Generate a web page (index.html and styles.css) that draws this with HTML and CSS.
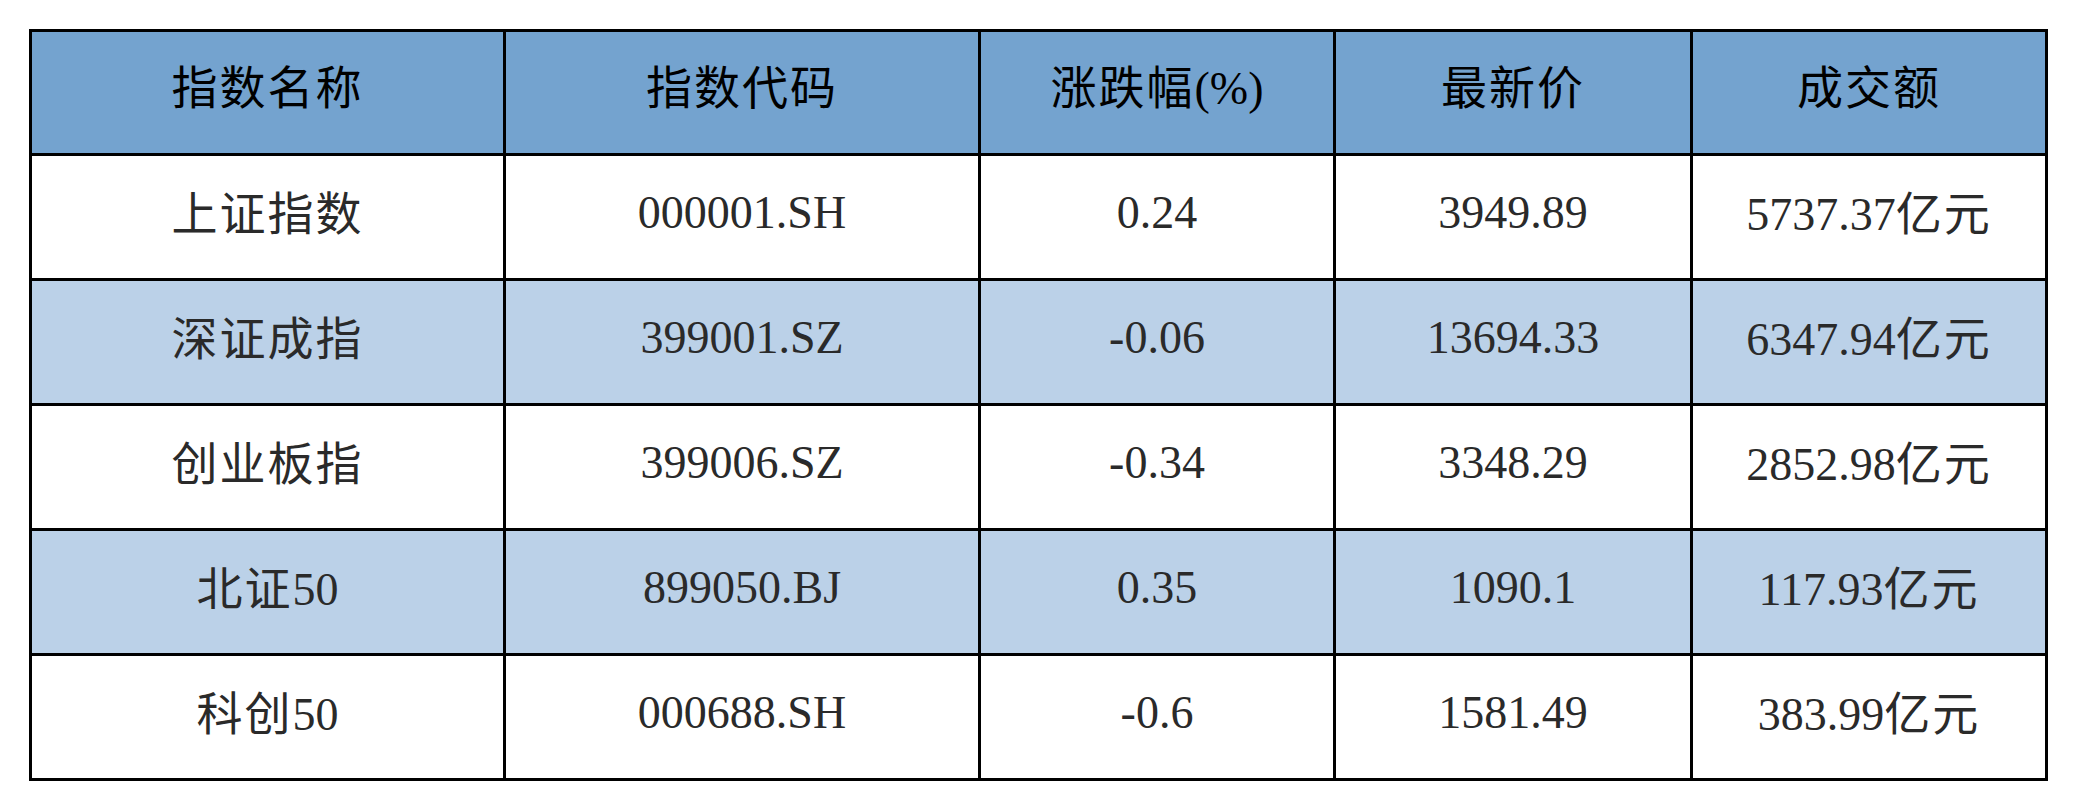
FILE: index.html
```html
<!DOCTYPE html>
<html lang="zh-CN">
<head>
<meta charset="utf-8">
<title>指数行情</title>
<link rel="stylesheet" href="styles.css">
</head>
<body>
<div class="page">
  <table class="quote-table">
    <colgroup>
      <col class="c-name">
      <col class="c-code">
      <col class="c-chg">
      <col class="c-price">
      <col class="c-amt">
    </colgroup>
    <thead>
      <tr>
        <th><span class="cj">指数名称</span></th>
        <th><span class="cj">指数代码</span></th>
        <th><span class="cj">涨跌幅</span>(%)</th>
        <th><span class="cj">最新价</span></th>
        <th><span class="cj">成交额</span></th>
      </tr>
    </thead>
    <tbody>
      <tr>
        <td><span class="cj">上证指数</span></td>
        <td>000001.SH</td>
        <td>0.24</td>
        <td>3949.89</td>
        <td>5737.37<span class="cj">亿元</span></td>
      </tr>
      <tr class="alt">
        <td><span class="cj">深证成指</span></td>
        <td>399001.SZ</td>
        <td>-0.06</td>
        <td>13694.33</td>
        <td>6347.94<span class="cj">亿元</span></td>
      </tr>
      <tr>
        <td><span class="cj">创业板指</span></td>
        <td>399006.SZ</td>
        <td>-0.34</td>
        <td>3348.29</td>
        <td>2852.98<span class="cj">亿元</span></td>
      </tr>
      <tr class="alt">
        <td><span class="cj">北证</span>50</td>
        <td>899050.BJ</td>
        <td>0.35</td>
        <td>1090.1</td>
        <td>117.93<span class="cj">亿元</span></td>
      </tr>
      <tr>
        <td><span class="cj">科创</span>50</td>
        <td>000688.SH</td>
        <td>-0.6</td>
        <td>1581.49</td>
        <td>383.99<span class="cj">亿元</span></td>
      </tr>
    </tbody>
  </table>
</div>
</body>
</html>
```
FILE: styles.css
```css
html, body {
  margin: 0;
  padding: 0;
  background: #ffffff;
}

.page {
  padding: 29px 0 0 29px;
}

.quote-table {
  border-collapse: collapse;
  width: 2019px;
  table-layout: fixed;
  font-family: "Liberation Serif", "Noto Sans CJK SC", serif;
  font-size: 46px;
  color: #2a2a2a;
}

.c-name { width: 474px; }
.c-code { width: 475px; }
.c-chg { width: 355px; }
.c-price { width: 357px; }
.c-amt { width: 355px; }

.quote-table th,
.quote-table td {
  border: 3px solid #000000;
  text-align: center;
  vertical-align: middle;
  padding: 0;
  font-weight: 400;
  line-height: 1.15;
}

.quote-table th {
  background: #74a3cf;
  color: #000000;
  padding-bottom: 12px;
  height: 109px;
}

.quote-table td {
  background: #ffffff;
  padding-bottom: 8px;
  height: 114px;
}

.quote-table tr.alt td {
  background: #bbd1e8;
}

.cj {
  font-family: "Noto Sans CJK SC", sans-serif;
  letter-spacing: 2px;
}
```
